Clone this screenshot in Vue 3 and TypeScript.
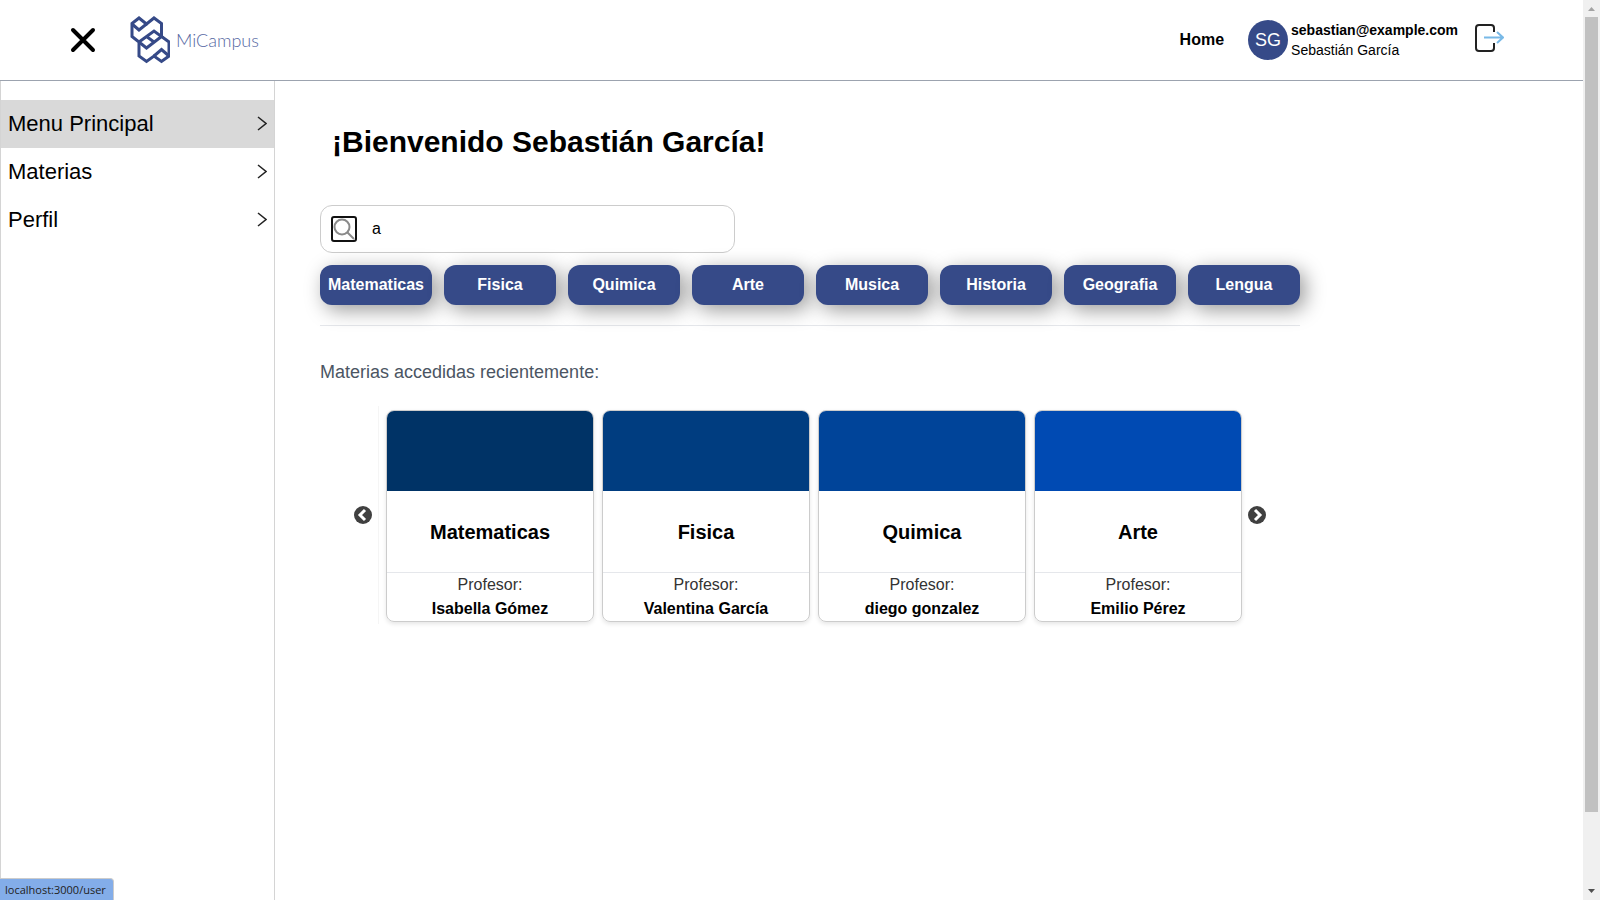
<script setup lang="ts">
import { ref } from 'vue'

interface Subject {
  name: string
  teacher: string
  tone: string
}

const search = ref('a')
const menu: string[] = ['Menu Principal', 'Materias', 'Perfil']
const categories: string[] = [
  'Matematicas', 'Fisica', 'Quimica', 'Arte', 'Musica', 'Historia', 'Geografia', 'Lengua',
]
const subjects: Subject[] = [
  { name: 'Matematicas', teacher: 'Isabella Gómez', tone: 'navy' },
  { name: 'Fisica', teacher: 'Valentina García', tone: 'deep' },
  { name: 'Quimica', teacher: 'diego gonzalez', tone: 'royal' },
  { name: 'Arte', teacher: 'Emilio Pérez', tone: 'bright' },
]
</script>

<template>
  <div class="window">
    <div class="page">
      <header class="topbar">
        <button class="close" type="button" aria-label="Cerrar menú">
          <svg width="26" height="26" viewBox="0 0 26 26"><path d="M3 3 L23 23 M23 3 L3 23" /></svg>
        </button>
        <a class="brand" href="#">
          <svg width="40" height="48" viewBox="0 0 40 48">
            <path d="M2 7.500 L9 2 L16.500 8 L24 2 L31.500 7.500 V20.500 L39 26 V40 L31.500 45.500 L24 40 L16.500 45.500 L9 40 V26 L2 20.500 Z" />
            <path d="M2 8 L9 14 L16.500 8 M9 26 L24 15 L31.500 20.500 L16.500 32 L9 26 M16.500 20.500 L24 26 M24 40 L31.500 33.500 L39 40" />
          </svg>
          <span>MiCampus</span>
        </a>
        <nav class="account">
          <a class="home" href="#">Home</a>
          <span class="avatar">SG</span>
          <span class="identity"><strong>sebastian@example.com</strong><span>Sebastián García</span></span>
          <button class="logout" type="button" aria-label="Cerrar sesión">
            <svg width="30" height="30" viewBox="0 0 30 30">
              <path class="door" d="M20 9 V5 Q20 2 17 2 H5 Q2 2 2 5 V25 Q2 28 5 28 H17 Q20 28 20 25 V20" />
              <path class="arrow" d="M10 14.500 H29 M23 9 L29 14.500 L23 20" />
            </svg>
          </button>
        </nav>
      </header>

      <div class="body">
        <aside class="sidebar">
          <a v-for="(item, i) in menu" :key="item" href="#" :class="{ active: i === 0 }">
            {{ item }}
            <svg width="10" height="16" viewBox="0 0 10 16"><path d="M1 1 L9 7.500 L1 14" /></svg>
          </a>
        </aside>

        <main class="content">
          <h1>¡Bienvenido Sebastián García!</h1>
          <form class="search" @submit.prevent>
            <button type="submit" aria-label="Buscar">
              <svg width="22" height="22" viewBox="0 0 22 22"><circle cx="9" cy="9" r="7.500" /><path d="M14 14 L21 21" /></svg>
            </button>
            <input v-model="search" type="text" aria-label="Buscar materias">
          </form>
          <div class="categories">
            <button v-for="c in categories" :key="c" type="button">{{ c }}</button>
          </div>
          <h2>Materias accedidas recientemente:</h2>
          <section class="carousel">
            <button class="step" type="button" aria-label="Anterior">
              <svg width="18" height="18" viewBox="0 0 18 18"><circle cx="9" cy="9" r="9" /><path d="M11 4 L6 9 L11 14" /></svg>
            </button>
            <div class="track">
              <article v-for="s in subjects" :key="s.name" class="card">
                <div class="cover" :class="s.tone"></div>
                <h3>{{ s.name }}</h3>
                <p>Profesor:<strong>{{ s.teacher }}</strong></p>
              </article>
            </div>
            <button class="step" type="button" aria-label="Siguiente">
              <svg width="18" height="18" viewBox="0 0 18 18"><circle cx="9" cy="9" r="9" /><path d="M7 4 L12 9 L7 14" /></svg>
            </button>
          </section>
        </main>
      </div>
    </div>

    <div class="scrollbar" aria-hidden="true">
      <svg width="17" height="17" viewBox="0 0 17 17"><path d="M5 11 H12 L8.500 7 Z" fill="#a3a3a3" /></svg>
      <div class="rail"><div class="thumb"></div></div>
      <svg width="17" height="17" viewBox="0 0 17 17"><path d="M5 6 H12 L8.500 10 Z" fill="#505050" /></svg>
    </div>
    <div class="status">localhost:3000/user</div>
  </div>
</template>

<style>
body {
  margin: 0;
}
</style>

<style scoped>
* {
  box-sizing: border-box;
}
.window {
  display: flex;
  min-height: 100vh;
  background: #fff;
  color: #000;
  font-family: "Liberation Sans", Arial, sans-serif;
  font-size: 16px;
  line-height: 24px;
}
button {
  padding: 0;
  border: 0;
  background: none;
  font: inherit;
  cursor: pointer;
}
a {
  color: inherit;
  text-decoration: none;
}
svg {
  display: block;
  fill: none;
}
h1, h2, h3, p {
  margin: 0;
}
.page {
  display: flex;
  flex: 1;
  flex-direction: column;
  min-width: 0;
}
.topbar {
  display: flex;
  align-items: center;
  height: 81px;
  padding: 0 79px 0 70px;
  border-bottom: 1px solid #9ca3af;
}
.close svg {
  stroke: #000;
  stroke-width: 4;
  stroke-linecap: round;
}
.brand {
  display: flex;
  align-items: center;
  gap: 6px;
  margin-left: 34px;
  color: #5668a3;
  font-family: Lato, sans-serif;
  font-size: 18px;
  font-weight: 300;
}
.brand svg {
  stroke: #364a88;
  stroke-width: 3;
}
.account {
  display: flex;
  align-items: center;
  margin-left: auto;
}
.home {
  margin-right: 24px;
  font-weight: 700;
}
.avatar {
  display: grid;
  place-items: center;
  width: 40px;
  height: 40px;
  margin-right: 3px;
  border-radius: 50%;
  background: #364a88;
  color: #fff;
  font-size: 18px;
}
.identity {
  display: flex;
  flex-direction: column;
  font-size: 14px;
  line-height: 20px;
}
.logout {
  margin: 0 0 4px 16px;
}
.logout .door {
  stroke: #222;
  stroke-width: 2;
}
.logout .arrow {
  stroke: #78b9e7;
  stroke-width: 2;
}
.body {
  display: flex;
  flex: 1;
}
.sidebar {
  flex: none;
  width: 275px;
  padding-top: 19px;
  border: solid #d4d4d4;
  border-width: 0 1px;
}
.sidebar a {
  display: flex;
  align-items: center;
  justify-content: space-between;
  height: 48px;
  padding: 0 7px;
  font-size: 22px;
}
.sidebar .active {
  background: #d9d9d9;
}
.sidebar svg {
  stroke: #222;
  stroke-width: 1.5;
}
.content {
  flex: 1;
  min-width: 0;
  padding: 43px 45px;
}
h1 {
  padding-left: 12px;
  font-size: 30px;
  line-height: 36px;
}
.search {
  display: flex;
  align-items: center;
  gap: 15px;
  max-width: 415px;
  height: 48px;
  margin-top: 45px;
  padding: 0 10px;
  border: 1px solid #ccc;
  border-radius: 12px;
}
.search button {
  padding: 0;
  border: 2px solid #111;
  border-radius: 3px;
}
.search svg {
  stroke: #8a8a8a;
  stroke-width: 2;
}
.search input {
  flex: 1;
  min-width: 0;
  padding: 0;
  border: 0;
  outline: 0;
  background: none;
  font: inherit;
}
.categories {
  display: flex;
  gap: 12px;
  max-width: 980px;
  padding: 12px 0 20px;
  border-bottom: 1px solid #e5e7eb;
}
.categories button {
  flex: 1;
  height: 40px;
  border-radius: 12px;
  background: #364a88;
  box-shadow: 5px 5px 20px rgba(0, 0, 0, 0.4);
  color: #fff;
  font-weight: 700;
}
h2 {
  margin-top: 32px;
  color: #4b5563;
  font-size: 18px;
  font-weight: 400;
  line-height: 28px;
}
.carousel {
  display: flex;
  align-items: center;
  justify-content: space-between;
  max-width: 980px;
  margin-top: 20px;
  padding: 0 34px;
}
.track {
  display: flex;
  flex: 1;
  gap: 8px;
  margin: 0 6px;
  padding: 4px 0 2px 7px;
  border-left: 1px solid #f5f5f5;
}
.card {
  flex: 1;
  overflow: hidden;
  border: 1px solid #ccc;
  border-radius: 8px;
  box-shadow: 0 2px 4px rgba(0, 0, 0, 0.1);
  text-align: center;
}
.cover {
  height: 80px;
}
.navy {
  background: #003366;
}
.deep {
  background: #003d80;
}
.royal {
  background: #004499;
}
.bright {
  background: #004ab3;
}
.card h3 {
  padding-top: 1px;
  border-bottom: 1px solid #e5e7eb;
  font-size: 20px;
  line-height: 80px;
}
.card p {
  color: #333;
}
.card strong {
  display: block;
  color: #000;
}
.step circle {
  fill: #404040;
}
.step path {
  stroke: #fff;
  stroke-width: 3;
}
.scrollbar {
  display: flex;
  flex: none;
  flex-direction: column;
  width: 17px;
  background: #f0f0f0;
}
.rail {
  flex: 1;
  padding: 0 2px;
}
.thumb {
  height: 91.8%;
  background: #c1c1c1;
}
.status {
  position: fixed;
  bottom: 0;
  left: 0;
  padding: 1px 7px 0 5px;
  border: solid #ccc;
  border-width: 1px 1px 0 0;
  border-radius: 0 4px 0 0;
  background: #83ade9;
  color: #222;
  font-family: "Open Sans", sans-serif;
  font-size: 11px;
  line-height: 20px;
}
</style>
